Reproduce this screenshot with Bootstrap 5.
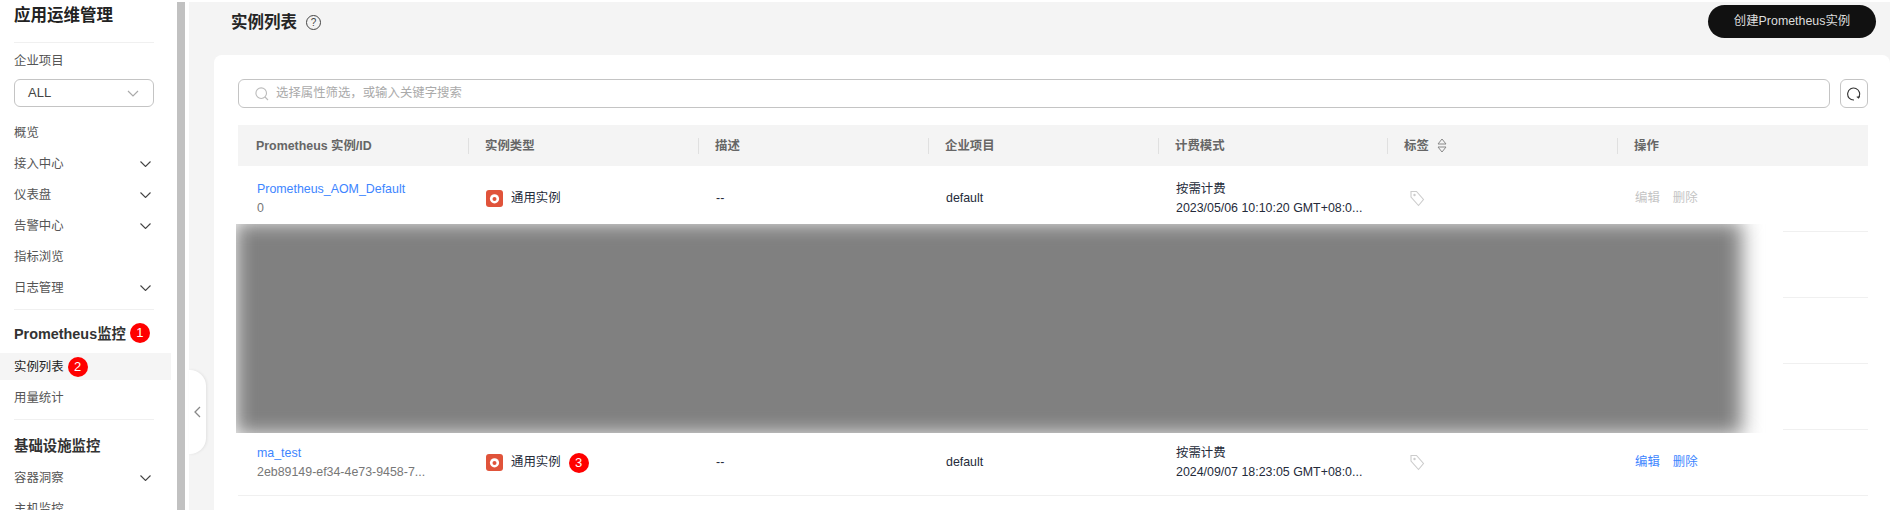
<!DOCTYPE html>
<html lang="zh">
<head>
<meta charset="utf-8">
<title>实例列表</title>
<link href="https://cdn.jsdelivr.net/npm/bootstrap@5.3.0/dist/css/bootstrap.min.css" rel="stylesheet">
<style>
html,body{height:523px;overflow:hidden;background:#fff}
body{font-family:"Liberation Sans","Noto Sans CJK SC",sans-serif;font-size:12.4px;color:#252b3a}
.app-shell{height:510px;padding-top:2px}
.side-panel{width:177px;flex:none;overflow:hidden;color:#555}
.side-title{height:26px;line-height:26px;margin-left:14px;font-size:16.5px;font-weight:700;color:#222}
.side-rule{margin:8px 23px 0 14px;height:1px;background:#f0f0f0}
.side-rule.first{margin-top:14px}
.side-label{height:18px;line-height:18px;margin:8px 0 0 14px;padding-top:1px}
.side-select{height:28px;width:140px;margin:10px 0 12px 14px;padding:0 14px 0 13px;border:1px solid #c4c4c4;border-radius:6px;font-size:13px;color:#444}
.side-item{height:27px;margin-bottom:4px;padding:1px 20px 0 14px;width:171px;color:#555}
.side-item.on{background:#f5f5f5;color:#222;margin-top:10px}
.side-item.after-head{margin-top:10px}
.side-head{height:20px;line-height:20px;margin:13px 0 0 14px;padding-top:2px;font-size:14.4px;font-weight:700;color:#333}
.side-head.lower{margin-top:14px}
.mark-dot{width:20px;height:20px;border-radius:50%;background:#f00;color:#fff;font-size:13px;line-height:20px;text-align:center;font-weight:400;font-family:"Liberation Sans",sans-serif;flex:none}
.side-head .mark-dot{margin-top:-3px}
.scroll-thumb{width:8px;flex:none;background:#c1c1c1}
.scroll-gap{width:4px;flex:none;background:#fff}
.main-area{background:#f4f4f4;min-width:0}
.main-top{height:53px;padding:3px 14px 0 42px}
.page-title{font-size:16.5px;font-weight:700;color:#252525;margin:0;line-height:34px}
.help-dot{width:15px;height:15px;border:1.3px solid #444;border-radius:50%;font-size:10px;line-height:13px;text-align:center;margin-left:9px;color:#444}
.make-btn{width:168px;height:33px;border-radius:17px;background:#111;border:0;color:#ddd;font-size:12.4px;padding:0}
.content-box{margin-left:25px;height:455px;background:#fff;border-radius:8px 8px 0 0;padding:24px 22px 0 24px}
.search-bar{height:29px;border:1px solid #c4c4c4;border-radius:6px;padding:0 12px 0 16px;color:#aaa;margin-right:10px}
.search-bar span{margin-left:7px}
.reload-btn{width:28px;height:29px;border:1px solid #c4c4c4;border-radius:6px;background:#fff;padding:0}
.grid-table{table-layout:fixed;width:1630px;margin:17px 0 0;border-collapse:collapse}
.grid-table th{height:41px;padding:0;background:#f4f4f4;font-weight:700;color:#666;font-size:12.4px;vertical-align:middle;border:0}
.grid-table td{height:66px;padding:1px 0 0 18px;vertical-align:middle;border:0;border-bottom:1px solid #f0f0f0;line-height:19px;color:#252b3a}
.grid-table tbody tr:first-child td{height:65px}
.grid-table td:first-child{padding-left:19px}
.w-std{width:230px}.w-bill{width:229px}.w-last{width:251px}
.head-cell{height:16px;line-height:16px;border-left:1px solid #e0e0e0;padding-left:16px}
.head-cell.first{border-left:0;padding-left:18px}
.blue-link{color:#3d85ff;text-decoration:none}
.faint-id{color:#777}
.off-act{color:#c4c4c4}
.act-gap{margin-left:13px}
.kind-icon{margin-right:8px;flex:none}
.veil{position:absolute;left:22px;top:169px;width:1547px;height:209px;background:#fff;overflow:hidden}
.veil-core{position:absolute;left:-1px;top:-2px;width:1507px;height:213px;background:#808080;filter:blur(10px)}
.fold-tab{position:absolute;left:0;top:368px;width:17px;height:84px;background:#fff;border-radius:0 16px 16px 0;box-shadow:1px 0 3px rgba(0,0,0,.08)}
</style>
</head>
<body>
<div class="app-shell d-flex">
  <aside class="side-panel">
    <div class="side-title">应用运维管理</div>
    <div class="side-rule first"></div>
    <div class="side-label">企业项目</div>
    <div class="side-select d-flex align-items-center justify-content-between">ALL
      <svg width="12" height="7" viewBox="0 0 12 7"><path d="M1 1l5 5 5-5" fill="none" stroke="#aaa" stroke-width="1.2"/></svg></div>
    <div class="side-item d-flex align-items-center">概览</div>
    <div class="side-item d-flex align-items-center justify-content-between">接入中心<svg width="11" height="6" viewBox="0 0 11 6"><path d="M.5.5l5 5 5-5" fill="none" stroke="#444" stroke-width="1.1"/></svg></div>
    <div class="side-item d-flex align-items-center justify-content-between">仪表盘<svg width="11" height="6" viewBox="0 0 11 6"><path d="M.5.5l5 5 5-5" fill="none" stroke="#444" stroke-width="1.1"/></svg></div>
    <div class="side-item d-flex align-items-center justify-content-between">告警中心<svg width="11" height="6" viewBox="0 0 11 6"><path d="M.5.5l5 5 5-5" fill="none" stroke="#444" stroke-width="1.1"/></svg></div>
    <div class="side-item d-flex align-items-center">指标浏览</div>
    <div class="side-item d-flex align-items-center justify-content-between mb-0">日志管理<svg width="11" height="6" viewBox="0 0 11 6"><path d="M.5.5l5 5 5-5" fill="none" stroke="#444" stroke-width="1.1"/></svg></div>
    <div class="side-rule"></div>
    <div class="side-head d-flex align-items-center gap-1">Prometheus监控<span class="mark-dot">1</span></div>
    <div class="side-item on d-flex align-items-center gap-1">实例列表<span class="mark-dot">2</span></div>
    <div class="side-item d-flex align-items-center mb-0">用量统计</div>
    <div class="side-rule"></div>
    <div class="side-head lower">基础设施监控</div>
    <div class="side-item after-head d-flex align-items-center justify-content-between">容器洞察<svg width="11" height="6" viewBox="0 0 11 6"><path d="M.5.5l5 5 5-5" fill="none" stroke="#444" stroke-width="1.1"/></svg></div>
    <div class="side-item d-flex align-items-center">主机监控</div>
  </aside>
  <div class="scroll-thumb"></div>
  <div class="scroll-gap"></div>
  <main class="main-area flex-grow-1 position-relative">
    <div class="main-top d-flex justify-content-between align-items-start">
      <div class="d-flex align-items-center">
        <h1 class="page-title">实例列表</h1>
        <span class="help-dot">?</span>
      </div>
      <button class="make-btn" type="button">创建Prometheus实例</button>
    </div>
    <div class="fold-tab d-flex align-items-center justify-content-center">
      <svg width="7" height="12" viewBox="0 0 7 12"><path d="M6 1L1 6l5 5" fill="none" stroke="#888" stroke-width="1.3"/></svg>
    </div>
    <section class="content-box position-relative">
      <div class="d-flex">
        <div class="search-bar flex-grow-1 d-flex align-items-center">
          <svg width="14" height="14" viewBox="0 0 14 14"><circle cx="6.2" cy="6.2" r="5.3" fill="none" stroke="#bbb" stroke-width="1.1"/><path d="M10 10l3 3" stroke="#bbb" stroke-width="1.1"/></svg>
          <span>选择属性筛选，或输入关键字搜索</span>
        </div>
        <button class="reload-btn d-flex align-items-center justify-content-center" type="button" aria-label="刷新">
          <svg width="14" height="14" viewBox="0 0 14 14"><path d="M11.6 10.4A6 6 0 1 0 7 13" fill="none" stroke="#333" stroke-width="1.1"/><path d="M9.8 9.6l1.8 1.4 1-2" fill="none" stroke="#333" stroke-width="1.1"/></svg>
        </button>
      </div>
      <table class="grid-table">
        <colgroup><col class="w-std"><col class="w-std"><col class="w-std"><col class="w-std"><col class="w-bill"><col class="w-std"><col class="w-last"></colgroup>
        <thead>
          <tr>
            <th><div class="head-cell first">Prometheus 实例/ID</div></th>
            <th><div class="head-cell">实例类型</div></th>
            <th><div class="head-cell">描述</div></th>
            <th><div class="head-cell">企业项目</div></th>
            <th><div class="head-cell">计费模式</div></th>
            <th><div class="head-cell d-flex align-items-center">标签
              <svg class="ms-2" width="10" height="15" viewBox="0 0 10 15"><path d="M5 1L1 6h8zM5 14L1 9h8z" fill="none" stroke="#888" stroke-width="1"/></svg></div></th>
            <th><div class="head-cell">操作</div></th>
          </tr>
        </thead>
        <tbody>
          <tr>
            <td><a class="blue-link" href="#">Prometheus_AOM_Default</a><br><span class="faint-id">0</span></td>
            <td><div class="d-flex align-items-center">
              <svg class="kind-icon" width="17" height="17" viewBox="0 0 17 17"><rect width="17" height="17" rx="3" fill="#e0533a"/><circle cx="8.5" cy="8.8" r="4.6" fill="#fff"/><circle cx="8.5" cy="9" r="2" fill="#e0533a"/></svg>通用实例</div></td>
            <td>--</td>
            <td>default</td>
            <td>按需计费<br>2023/05/06 10:10:20 GMT+08:0...</td>
            <td><svg class="ms-1" width="17" height="17" viewBox="0 0 17 17"><path d="M2 1.5h5.5l7 8-5 6-7.5-8.500z" fill="none" stroke="#ccc" stroke-width="1.1"/><circle cx="5.500" cy="5" r="1.200" fill="#ccc"/></svg></td>
            <td><span class="off-act">编辑</span><span class="off-act act-gap">删除</span></td>
          </tr>
          <tr><td colspan="7"></td></tr>
          <tr><td colspan="7"></td></tr>
          <tr><td colspan="7"></td></tr>
          <tr>
            <td><a class="blue-link" href="#">ma_test</a><br><span class="faint-id">2eb89149-ef34-4e73-9458-7...</span></td>
            <td><div class="d-flex align-items-center">
              <svg class="kind-icon" width="17" height="17" viewBox="0 0 17 17"><rect width="17" height="17" rx="3" fill="#e0533a"/><circle cx="8.5" cy="8.8" r="4.6" fill="#fff"/><circle cx="8.5" cy="9" r="2" fill="#e0533a"/></svg>通用实例<span class="mark-dot ms-2">3</span></div></td>
            <td>--</td>
            <td>default</td>
            <td>按需计费<br>2024/09/07 18:23:05 GMT+08:0...</td>
            <td><svg class="ms-1" width="17" height="17" viewBox="0 0 17 17"><path d="M2 1.5h5.500l7 8-5 6-7.500-8.500z" fill="none" stroke="#ccc" stroke-width="1.1"/><circle cx="5.500" cy="5" r="1.200" fill="#ccc"/></svg></td>
            <td><a class="blue-link" href="#">编辑</a><a class="blue-link act-gap" href="#">删除</a></td>
          </tr>
        </tbody>
      </table>
      <div class="veil"><div class="veil-core"></div></div>
    </section>
  </main>
</div>
<script src="https://cdn.jsdelivr.net/npm/bootstrap@5.3.0/dist/js/bootstrap.bundle.min.js"></script>
</body>
</html>
